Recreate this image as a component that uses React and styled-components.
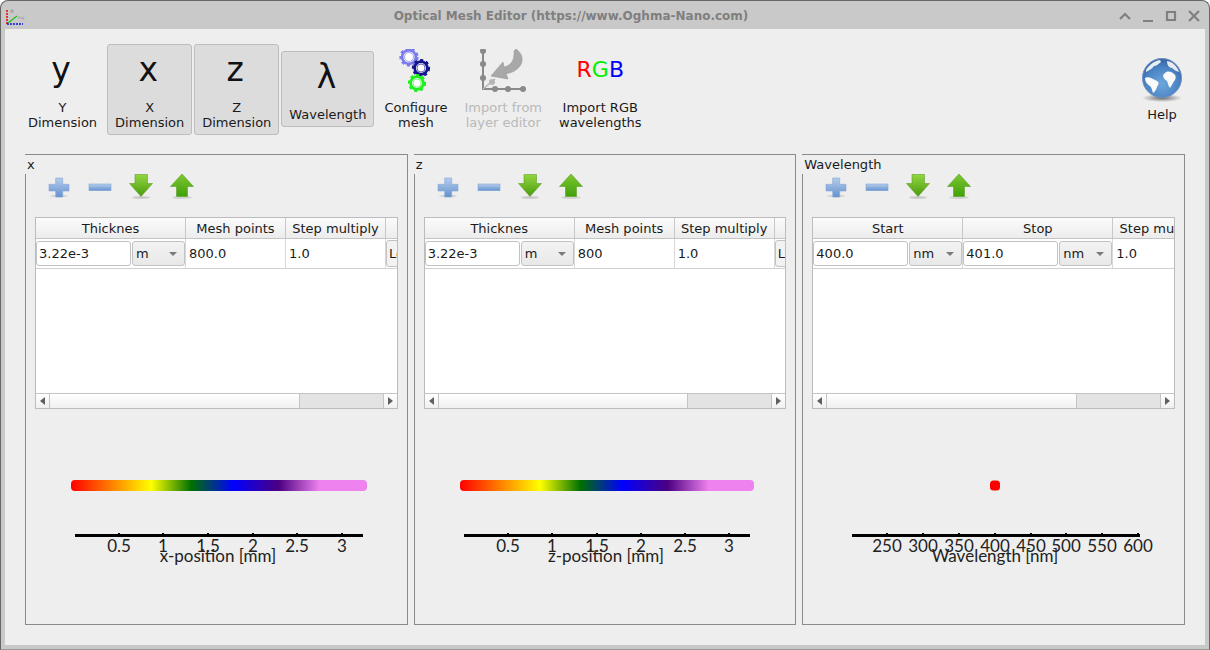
import React from 'react';
import styled, { createGlobalStyle } from 'styled-components';

const GlobalStyle = createGlobalStyle`
  html, body {
    margin: 0;
    padding: 0;
    background: #ffffff;
  }
  * {
    box-sizing: border-box;
  }
`;

const Window = styled.div`
  width: 1210px;
  height: 650px;
  display: flex;
  flex-direction: column;
  background: #c9c9c9;
  border: 1px solid #666;
  border-bottom-color: #999;
  border-radius: 8px 8px 0 0;
  padding: 0 4px 4px;
  overflow: hidden;
  font-family: 'DejaVu Sans', sans-serif;
  font-size: 13px;
  color: #1a1a1a;
`;

const TitleBar = styled.div`
  height: 28px;
  flex: none;
  display: flex;
  align-items: center;
  padding-top: 1px;
`;

const AppIcon = styled.svg`
  flex: none;
  width: 22px;
  height: 20px;
`;

const IconText = styled.text`
  font-family: 'DejaVu Sans', sans-serif;
  font-size: ${({ $size }) => $size}px;
  fill: #8a8a8a;
`;

const TitleText = styled.div`
  flex: 1;
  text-align: center;
  font-size: 12px;
  font-weight: 700;
  color: #7f7f7f;
  padding-right: 2px;
`;

const WindowButtons = styled.div`
  flex: none;
  display: flex;
  gap: 7px;
  padding-right: 3px;
`;

const WindowButton = styled.svg`
  width: 16px;
  height: 16px;
  display: block;
  fill: none;
  stroke: #808080;
  stroke-width: 2.2;
`;

const Main = styled.div`
  flex: 1;
  display: flex;
  flex-direction: column;
  min-height: 0;
  background: #eeeeee;
  padding: 15px 11px 20px 15px;
`;

const Toolbar = styled.div`
  height: 91px;
  flex: none;
  display: flex;
  align-items: center;
  gap: 2px;
`;

const ToolButton = styled.div`
  display: flex;
  flex-direction: column;
  align-items: center;
  padding: 4px 7px;
  border-radius: 3px;
  line-height: 15px;
  text-align: center;
  white-space: pre-line;
  min-width: 64px;
  margin-left: ${({ $push, $tuck }) => ($push ? 'auto' : $tuck ? '-1px' : '0')};
  margin-bottom: ${({ $single }) => ($single ? '1px' : '0')};
  color: ${({ $disabled }) => ($disabled ? '#b9b9b9' : '#1a1a1a')};
  background: ${({ $active }) => ($active ? '#dcdcdc' : 'transparent')};
  border: 1px solid ${({ $active }) => ($active ? '#bdbdbd' : 'transparent')};
`;

const ToolIcon = styled.div`
  width: 48px;
  height: 48px;
  display: flex;
  align-items: center;
  justify-content: center;
  margin-bottom: 3px;
`;

const BigLetter = styled.span`
  font-size: 33px;
  line-height: 40px;
  margin: -6px 0 0 -3px;
  color: #111;
`;

const RgbLetters = styled.span`
  font-size: 22px;
  line-height: 30px;
  margin-top: -6px;
`;

const RgbLetter = styled.span`
  color: ${({ $color }) => $color};
`;

const Panels = styled.div`
  flex: 1;
  min-height: 0;
  display: flex;
  gap: 6px;
  margin: 19px 9px 0 5px;
`;

const Panel = styled.section`
  flex: 1;
  min-width: 0;
  display: flex;
  flex-direction: column;
  border: 1px solid #8a8a8a;
`;

const PanelLabel = styled.div`
  align-self: flex-start;
  height: 19px;
  margin-left: -1px;
  padding: 2px 3px 0 2px;
  background: #eeeeee;
  line-height: 16px;
`;

const ListButtons = styled.div`
  display: flex;
  gap: 11px;
  height: 30px;
  margin: -2px 0 0 18px;
`;

const ListIcon = styled.svg`
  width: 30px;
  height: 30px;
  display: block;
`;

const Table = styled.div`
  height: 192px;
  flex: none;
  margin: 15px 9px 0 9px;
  display: flex;
  flex-direction: column;
  border: 1px solid #bcbcbc;
  background: #ffffff;
  overflow: hidden;
`;

const HeaderRow = styled.div`
  height: 21px;
  flex: none;
  display: flex;
  background: linear-gradient(#fbfbfb, #ececec);
  border-bottom: 1px solid #c4c4c4;
`;

const HeaderCell = styled.div`
  flex: none;
  width: ${({ $width }) => $width}px;
  border-right: 1px solid #c8c8c8;
  text-align: center;
  line-height: 21px;
  white-space: nowrap;
  overflow: hidden;
`;

const BodyRow = styled.div`
  height: 30px;
  flex: none;
  display: flex;
  border-bottom: 1px solid #d0d0d0;
`;

const BodyCell = styled.div`
  flex: none;
  width: ${({ $width }) => $width}px;
  display: flex;
  align-items: center;
  gap: 1px;
  padding-left: ${({ $tight }) => ($tight ? '0' : '3px')};
  border-right: 1px solid #d8d8d8;
  overflow: hidden;
`;

const TextBox = styled.div`
  width: 95px;
  height: 25px;
  flex: none;
  padding: 0 2px;
  line-height: 23px;
  background: #ffffff;
  border: 1px solid #c2c2c2;
  border-radius: 3px;
`;

const Combo = styled.div`
  width: 53px;
  height: 25px;
  flex: none;
  display: flex;
  align-items: center;
  justify-content: space-between;
  padding: 0 7px 0 3px;
  background: linear-gradient(#f3f3f3, #e8e8e8);
  border: 1px solid #c2c2c2;
  border-radius: 3px;

  &::after {
    content: '';
    border-left: 4px solid transparent;
    border-right: 4px solid transparent;
    border-top: 4px solid #7a7a7a;
  }
`;

const EdgeButton = styled.div`
  width: 90px;
  height: 27px;
  flex: none;
  padding-left: 2px;
  line-height: 25px;
  background: #f2f2f2;
  border: 1px solid #c2c2c2;
  border-radius: 3px;
`;

const TableSpace = styled.div`
  flex: 1;
`;

const Scrollbar = styled.div`
  height: 15px;
  flex: none;
  display: flex;
  border-top: 1px solid #c4c4c4;
  background: linear-gradient(#ffffff, #f0f0f0);
`;

const ScrollArrow = styled.div`
  width: 14px;
  flex: none;
  display: flex;
  align-items: center;
  justify-content: center;
  border-left: ${({ $right }) => ($right ? '1px solid #c4c4c4' : 'none')};
  border-right: ${({ $right }) => ($right ? 'none' : '1px solid #c4c4c4')};

  &::after {
    content: '';
    border-top: 4px solid transparent;
    border-bottom: 4px solid transparent;
    border-left: ${({ $right }) => ($right ? '5px solid #606060' : 'none')};
    border-right: ${({ $right }) => ($right ? 'none' : '5px solid #606060')};
  }
`;

const ScrollTrack = styled.div`
  flex: 1;
`;

const ScrollThumb = styled.div`
  width: 84px;
  flex: none;
  background: #e3e3e3;
  border-left: 1px solid #c4c4c4;
`;

const ChartSvg = styled.svg`
  display: block;
  width: 381px;
  height: 215px;
  flex: none;
`;

const AxisText = styled.text`
  font-family: Lato, sans-serif;
  font-size: 17px;
  fill: #222;
  text-anchor: middle;
`;

function PlusIcon() {
  return (
    <ListIcon viewBox="0 0 30 30">
      <defs>
        <linearGradient id="blueFill" x1="0" y1="0" x2="0" y2="1">
          <stop offset="0" stopColor="#b6cdec" />
          <stop offset="1" stopColor="#6392cf" />
        </linearGradient>
      </defs>
      <ellipse cx="15" cy="24" rx="9" ry="1.5" fill="#000" opacity="0.1" />
      <path d="M11.7 6h7v6.300H25v6.700h-6.300v6h-7v-6H5v-6.700h6.700z" fill="url(#blueFill)" stroke="#85a6d3" strokeWidth="0.6" />
    </ListIcon>
  );
}

function MinusIcon() {
  return (
    <ListIcon viewBox="0 0 30 30">
      <rect x="4" y="12" width="22" height="6.700" fill="url(#blueFill)" stroke="#85a6d3" strokeWidth="0.6" />
    </ListIcon>
  );
}

function DownIcon() {
  return (
    <ListIcon viewBox="0 0 30 30">
      <defs>
        <linearGradient id="greenFill" x1="0" y1="0" x2="0" y2="1">
          <stop offset="0" stopColor="#93d63f" />
          <stop offset="1" stopColor="#4a9a10" />
        </linearGradient>
      </defs>
      <ellipse cx="15" cy="25.500" rx="9" ry="1.500" fill="#000" opacity="0.15" />
      <path d="M9 2.500h12.500v9H26.500L15 24.500 3.500 11.500H9z" fill="url(#greenFill)" stroke="#5f9f2a" strokeWidth="0.6" />
    </ListIcon>
  );
}

function UpIcon() {
  return (
    <ListIcon viewBox="0 0 30 30">
      <defs>
        <linearGradient id="greenUp" x1="0" y1="0" x2="0" y2="1">
          <stop offset="0" stopColor="#7fc832" />
          <stop offset="1" stopColor="#3fa008" />
        </linearGradient>
      </defs>
      <ellipse cx="15" cy="25.500" rx="10" ry="1.500" fill="#000" opacity="0.12" />
      <path d="M15 2 26.500 14.500H20.500V24.500H9.500V14.500H3.500z" fill="url(#greenUp)" stroke="#5f9f2a" strokeWidth="0.6" />
    </ListIcon>
  );
}

function Gear({ cx, cy, r, color, inner }) {
  return (
    <g>
      <circle cx={cx} cy={cy} r={r - 1.2} fill="none" stroke={color} strokeWidth="2.6" strokeDasharray="3 2.94" />
      <circle cx={cx} cy={cy} r={r - 2.6} fill="none" stroke={color} strokeWidth="2.6" />
      <circle cx={cx} cy={cy} r={r - 5} fill="#fff" stroke={inner} strokeWidth="1" />
    </g>
  );
}

function GearsIcon() {
  return (
    <svg width="48" height="48" viewBox="0 0 48 48">
      <Gear cx={17} cy={8} r={9.500} color="#7a7aef" inner="#a8a8f5" />
      <Gear cx={29} cy={19} r={9} color="#14148c" inner="#6a6ac0" />
      <Gear cx={25} cy={34} r={9} color="#1fee1f" inner="#88f088" />
    </svg>
  );
}

function ImportIcon() {
  return (
    <svg width="48" height="48" viewBox="0 1 48 48">
      <path d="M4 3V41H44" fill="none" stroke="#8a8a8a" strokeWidth="2" />
      <g fill="#8a8a8a">
        <circle cx="4" cy="3" r="3" />
        <circle cx="4" cy="16" r="3" />
        <circle cx="4" cy="30" r="3" />
        <circle cx="16" cy="41" r="3" />
        <circle cx="29" cy="41" r="3" />
        <circle cx="44" cy="41" r="3" />
      </g>
      <path d="M4 41 16 31" fill="none" stroke="#b5b5b5" strokeWidth="1.500" />
      <circle cx="13" cy="34" r="3" fill="#b5b5b5" />
      <path d="M12 28 24 14 25 19C31 18 36 13 35 3L37 1C43 5 45 12 41 18 38 22 33 25 27 25.500L29 31Z" fill="#a8a8a8" stroke="#959595" strokeWidth="0.6" />
    </svg>
  );
}

function GlobeIcon() {
  return (
    <svg width="48" height="48" viewBox="0 1 48 48">
      <defs>
        <radialGradient id="globeFill" cx="0.5" cy="0.65" r="0.6">
          <stop offset="0" stopColor="#6fa6dc" />
          <stop offset="0.7" stopColor="#4a84c4" />
          <stop offset="1" stopColor="#3d67a6" />
        </radialGradient>
        <radialGradient id="globeShadow" cx="0.5" cy="0.5" r="0.5">
          <stop offset="0" stopColor="#000" stopOpacity="0.55" />
          <stop offset="1" stopColor="#000" stopOpacity="0" />
        </radialGradient>
      </defs>
      <ellipse cx="24" cy="43" rx="20" ry="4" fill="url(#globeShadow)" />
      <circle cx="24" cy="23" r="19.500" fill="url(#globeFill)" stroke="#6d8fc0" strokeWidth="1" />
      <path d="M8 15C11 10 16 6 22 5L23 7C20 9 19 11 16 11 14 14 11 15 8 17Z" fill="#e6edf5" />
      <path d="M29 6C35 7 39 11 41 17 38 16 36 15 34 13 31 13 29 10 29 6Z" fill="#e6e9ee" />
      <path d="M27 18C30 15 34 17 36 19 38 20 38 23 37 25 35 27 34 30 32 33 30 31 30 28 29 26 27 25 25 23 25 20Z" fill="#fafafa" />
      <path d="M7 23C10 21 15 24 19 26 22 28 20 30 19 32 18 35 17 37 15 38 14 35 14 33 12 31 9 29 7 27 7 23Z" fill="#fafafa" />
    </svg>
  );
}

function ColorBar({ id, from, to }) {
  const span = to - from;
  return (
    <g>
      <defs>
        <linearGradient id={id}>
          <stop offset="0" stopColor="#ff0000" />
          <stop offset={78 / span} stopColor="#ffff00" />
          <stop offset={117 / span} stopColor="#007000" />
          <stop offset={158 / span} stopColor="#0000ff" />
          <stop offset={202 / span} stopColor="#4b0082" />
          <stop offset={242 / span} stopColor="#ee82ee" />
          <stop offset="1" stopColor="#ee82ee" />
        </linearGradient>
      </defs>
      <rect x={from - 4} y="71" width={span + 8} height="11" rx="4" fill={`url(#${id})`} />
    </g>
  );
}

function Chart({ id, axis, ticks, label, bar, dot }) {
  const labelX = (axis[0] + axis[1]) / 2 - 1;
  return (
    <ChartSvg viewBox="0 0 381 215">
      {bar && <ColorBar id={id} from={bar[0]} to={bar[1]} />}
      {dot && <rect x={dot - 5} y="71.500" width="10" height="10" rx="3.500" fill="#ff0000" />}
      <rect x={axis[0]} y="125" width={axis[1] - axis[0]} height="3" fill="#000" />
      {ticks.map(t => (
        <g key={t.text}>
          <rect x={t.x - 1} y="124" width="2" height="2" fill="#000" />
          <AxisText x={t.x} y="143">{t.text}</AxisText>
        </g>
      ))}
      <AxisText x={labelX} y="153">{label}</AxisText>
    </ChartSvg>
  );
}

function MeshTable({ columns, cells }) {
  return (
    <Table>
      <HeaderRow>
        {columns.map(c => (
          <HeaderCell key={c.title} $width={c.width}>{c.title}</HeaderCell>
        ))}
      </HeaderRow>
      <BodyRow>
        {cells.map((cell, i) => (
          <BodyCell key={i} $width={columns[i].width} $tight={cell.unit || cell.edge}>
            {cell.unit ? (
              <>
                <TextBox>{cell.text}</TextBox>
                <Combo>{cell.unit}</Combo>
              </>
            ) : cell.edge ? (
              <EdgeButton>{cell.text}</EdgeButton>
            ) : (
              cell.text
            )}
          </BodyCell>
        ))}
      </BodyRow>
      <TableSpace />
      <Scrollbar>
        <ScrollArrow />
        <ScrollTrack />
        <ScrollThumb />
        <ScrollArrow $right />
      </Scrollbar>
    </Table>
  );
}

function MeshPanel({ title, columns, cells, chart }) {
  return (
    <Panel>
      <PanelLabel>{title}</PanelLabel>
      <ListButtons>
        <PlusIcon />
        <MinusIcon />
        <DownIcon />
        <UpIcon />
      </ListButtons>
      <MeshTable columns={columns} cells={cells} />
      <Chart {...chart} />
    </Panel>
  );
}

const thicknessColumns = [
  { title: 'Thicknes', width: 150 },
  { title: 'Mesh points', width: 100 },
  { title: 'Step multiply', width: 100 },
  { title: 'Left', width: 100 },
];

const wavelengthColumns = [
  { title: 'Start', width: 150 },
  { title: 'Stop', width: 150 },
  { title: 'Step multiply', width: 100 },
];

const mmLabels = ['0.5', '1', '1.5', '2', '2.5', '3'];

const panels = [
  {
    title: 'x',
    columns: thicknessColumns,
    cells: [
      { text: '3.22e-3', unit: 'm' },
      { text: '800.0' },
      { text: '1.0' },
      { text: 'Left', edge: true },
    ],
    chart: {
      id: 'barX',
      axis: [49, 337],
      bar: [49, 337],
      label: 'x-position [mm]',
      ticks: [93, 137, 182, 227, 271, 316].map((x, i) => ({ x, text: mmLabels[i] })),
    },
  },
  {
    title: 'z',
    columns: thicknessColumns,
    cells: [
      { text: '3.22e-3', unit: 'm' },
      { text: '800' },
      { text: '1.0' },
      { text: 'Left', edge: true },
    ],
    chart: {
      id: 'barZ',
      axis: [49, 335],
      bar: [49, 335],
      label: 'z-position [mm]',
      ticks: [93, 137, 182, 226, 270, 314].map((x, i) => ({ x, text: mmLabels[i] })),
    },
  },
  {
    title: 'Wavelength',
    columns: wavelengthColumns,
    cells: [
      { text: '400.0', unit: 'nm' },
      { text: '401.0', unit: 'nm' },
      { text: '1.0' },
    ],
    chart: {
      axis: [49, 337],
      dot: 192,
      label: 'Wavelength [nm]',
      ticks: [84, 120, 156, 192, 228, 263, 299, 335].map((x, i) => ({ x, text: String(250 + i * 50) })),
    },
  },
];

export default function App() {
  return (
    <>
      <GlobalStyle />
      <Window>
        <TitleBar>
          <AppIcon viewBox="0 0 22 20">
            <path d="M2 4V18" stroke="#e01010" strokeWidth="1.600" strokeDasharray="2 1" />
            <path d="M2 18H18" stroke="#1010e0" strokeWidth="1.600" strokeDasharray="2 1" />
            <path d="M3 17 12 10" stroke="#20c020" strokeWidth="1.200" />
            <IconText $size={5} x="5" y="7">Φ</IconText>
            <IconText $size={4} x="13" y="13">lnμ</IconText>
          </AppIcon>
          <TitleText>Optical Mesh Editor (https://www.Oghma-Nano.com)</TitleText>
          <WindowButtons>
            <WindowButton viewBox="0 0 16 16"><path d="M3 11 8 6l5 5" /></WindowButton>
            <WindowButton viewBox="0 0 16 16"><path d="M3 13H13" /></WindowButton>
            <WindowButton viewBox="0 0 16 16"><path d="M4 4h8v8H4z" /></WindowButton>
            <WindowButton viewBox="0 0 16 16"><path d="M3 3 13 13M13 3 3 13" /></WindowButton>
          </WindowButtons>
        </TitleBar>
        <Main>
          <Toolbar>
            <ToolButton>
              <ToolIcon><BigLetter>y</BigLetter></ToolIcon>
              {'Y\nDimension'}
            </ToolButton>
            <ToolButton $active>
              <ToolIcon><BigLetter>x</BigLetter></ToolIcon>
              {'X\nDimension'}
            </ToolButton>
            <ToolButton $active>
              <ToolIcon><BigLetter>z</BigLetter></ToolIcon>
              {'Z\nDimension'}
            </ToolButton>
            <ToolButton $active $single>
              <ToolIcon><BigLetter>λ</BigLetter></ToolIcon>
              Wavelength
            </ToolButton>
            <ToolButton>
              <ToolIcon><GearsIcon /></ToolIcon>
              {'Configure\nmesh'}
            </ToolButton>
            <ToolButton $disabled $tuck>
              <ToolIcon><ImportIcon /></ToolIcon>
              {'Import from\nlayer editor'}
            </ToolButton>
            <ToolButton $tuck>
              <ToolIcon>
                <RgbLetters>
                  <RgbLetter $color="#ff0000">R</RgbLetter>
                  <RgbLetter $color="#00f000">G</RgbLetter>
                  <RgbLetter $color="#0000ff">B</RgbLetter>
                </RgbLetters>
              </ToolIcon>
              {'Import RGB\nwavelengths'}
            </ToolButton>
            <ToolButton $push $single>
              <ToolIcon><GlobeIcon /></ToolIcon>
              Help
            </ToolButton>
          </Toolbar>
          <Panels>
            {panels.map(p => (
              <MeshPanel key={p.title} {...p} />
            ))}
          </Panels>
        </Main>
      </Window>
    </>
  );
}
